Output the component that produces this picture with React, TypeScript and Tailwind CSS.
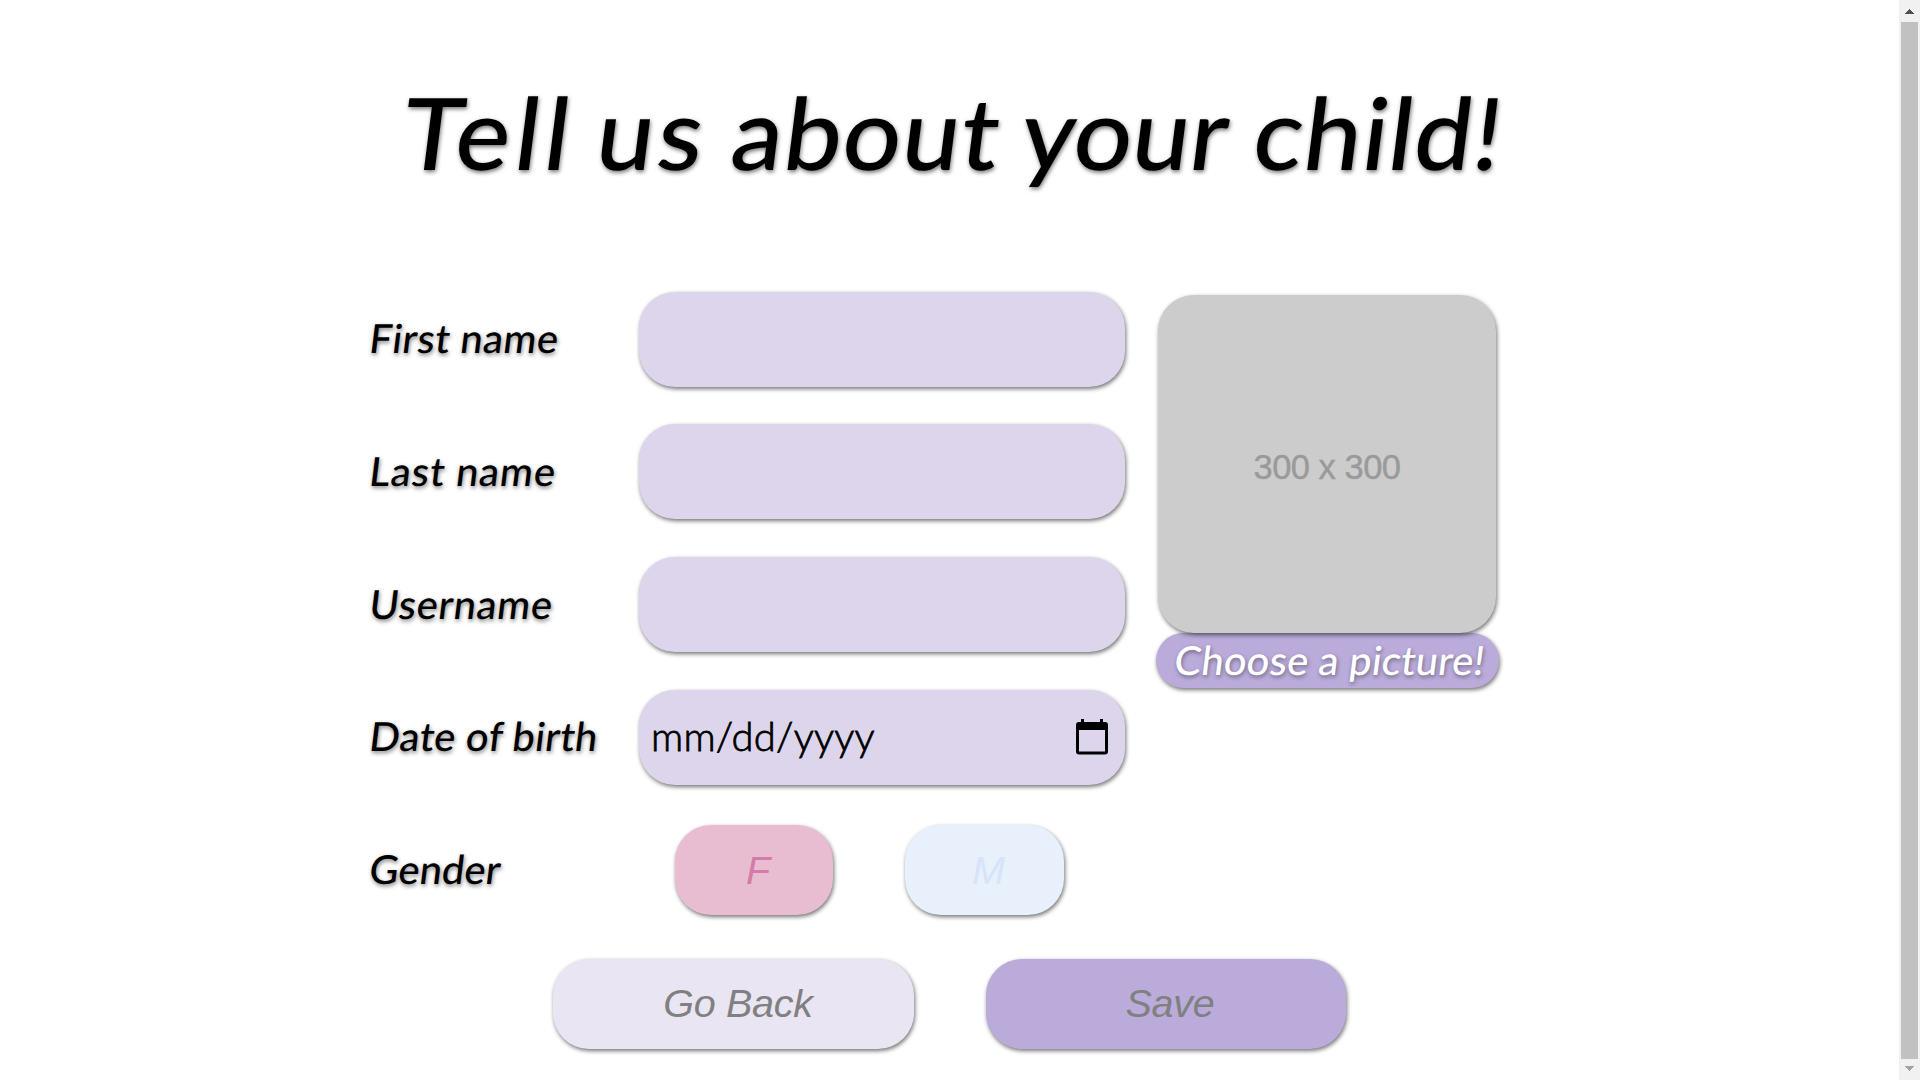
import type { ReactNode } from "react";

const slanted = "inline-block origin-bottom-left -skew-x-[7deg] whitespace-nowrap font-medium font-['Lato',sans-serif]";
const raised = "shadow-[1px_2px_4px_rgba(0,0,0,0.55)]";
const field = "h-[95px] w-[486px] rounded-[36px] bg-[#ddd5ec]";

function Row({ label, spacing, children }: { label: string; spacing: string; children: ReactNode }) {
  return (
    <div className="flex h-[95px] items-center">
      <label className="w-[272px] shrink-0 pb-[2px] text-[40px] leading-[48px] [text-shadow:1px_2px_4px_rgba(0,0,0,0.5)]">
        <span className={`${slanted} ${spacing}`}>{label}</span>
      </label>
      {children}
    </div>
  );
}

function CalendarIcon() {
  return (
    <svg width="32" height="36" viewBox="0 0 32 36" fill="none">
      <path d="M5 0h3v3h16V0h3v3h2a3 3 0 0 1 3 3v26.500a3 3 0 0 1-3 3H3a3 3 0 0 1-3-3V6a3 3 0 0 1 3-3h2zM3 11v21.500h26V11z" fill="#000" fillRule="evenodd" />
    </svg>
  );
}

function Scrollbar() {
  return (
    <div className="flex h-full w-[21px] shrink-0 flex-col items-center bg-[#f1f1f1]">
      <div className="flex h-[22px] items-center">
        <svg width="9" height="5" viewBox="0 0 9 5" shapeRendering="crispEdges"><path d="M0 5L4.500 0L9 5z" fill="#505050" /></svg>
      </div>
      <div className="w-[17px] flex-1 bg-[#c1c1c1]" />
      <div className="flex h-[21px] items-center pb-[2px]">
        <svg width="9" height="5" viewBox="0 0 9 5" shapeRendering="crispEdges"><path d="M0 0L4.500 5L9 0z" fill="#a3a3a3" /></svg>
      </div>
    </div>
  );
}

export default function App() {
  return (
    <div className="flex h-[1080px] w-[1920px] overflow-hidden bg-white text-black">
      <main className="flex-1">
        <h1 className="h-[291.5px] pt-[71px] pl-[396px] text-[100px] leading-[120px] [text-shadow:1px_2px_4px_rgba(0,0,0,0.55)]">
          <span className={`${slanted} scale-x-[1.03]`}>
            <span className="tracking-[4.7px] [word-spacing:-8px]">Tell </span>
            <span className="tracking-[3.5px] [word-spacing:-4px]">us </span>
            <span className="tracking-[0.9px] [word-spacing:-4px]">about </span>
            <span className="tracking-[0px] [word-spacing:2px]">your </span>
            <span className="tracking-[1px]">child!</span>
          </span>
        </h1>

        <div className="flex pl-[367px]">
          <div className="flex w-[790px] flex-col gap-[37.8px]">
            <Row label="First name" spacing="tracking-[0.35px]"><div className={`${field} ${raised}`} /></Row>
            <Row label="Last name" spacing="tracking-[0.8px]"><div className={`${field} ${raised}`} /></Row>
            <Row label="Username" spacing="tracking-[0.6px]"><div className={`${field} ${raised}`} /></Row>
            <Row label="Date of birth" spacing="tracking-[0.25px]">
              <div className={`${field} ${raised} flex items-center justify-between pl-[12px] pr-[17px]`}>
                <span className="pb-[3px] text-[40px] leading-[48px] font-light tracking-[0.2px] [-webkit-text-stroke:0.8px_black] font-['Lato',sans-serif]">mm/dd/yyyy</span>
                <CalendarIcon />
              </div>
            </Row>
            <Row label="Gender" spacing="tracking-[0px]">
              <div className="flex gap-[72px] pl-[36px] font-['Liberation_Sans',sans-serif] text-[39.5px] italic">
                <button className={`h-[90px] w-[158px] rounded-[36px] bg-[#e8bdd1] text-[#d67ba8] ${raised} pt-[1px] pl-[8px]`}>F</button>
                <button className={`h-[90px] w-[159px] rounded-[36px] bg-[#e8f0fc] text-[#d6e4fa] ${raised} pt-[1px] pl-[8px]`}>M</button>
              </div>
            </Row>
          </div>

          <div className="flex w-[340px] flex-col items-center pt-[3.5px]">
            <div className={`relative z-10 flex h-[338px] w-[338px] shrink-0 items-center justify-center rounded-[36px] bg-[#cccccc] pt-[8px] font-['Liberation_Sans',sans-serif] text-[34.5px] tracking-[-0.5px] text-[#9a9a9a] [-webkit-text-stroke:0.4px_#9a9a9a] ${raised}`}>
              300 x 300
            </div>
            <button className={`-mx-1 flex h-[55px] w-[343px] shrink-0 items-center justify-center rounded-full bg-[#baabda] pb-[2px] text-[40px] leading-[48px] text-white [text-shadow:1px_2px_4px_rgba(0,0,0,0.4)] ${raised}`}>
              <span className={`${slanted} tracking-[0.15px]`}>Choose a picture!</span>
            </button>
          </div>
        </div>

        <div className="flex gap-[72px] pt-[41px] pl-[553px] font-['Liberation_Sans',sans-serif] text-[39.5px] text-[#808080] italic">
          <button className={`h-[90px] w-[361px] rounded-[36px] bg-[#e9e5f3] ${raised} pl-[9px] tracking-[-0.3px]`}>Go Back</button>
          <button className={`h-[90px] w-[360px] rounded-[36px] bg-[#baabda] ${raised} pl-[8px] tracking-[-0.3px]`}>Save</button>
        </div>
      </main>
      <Scrollbar />
    </div>
  );
}
